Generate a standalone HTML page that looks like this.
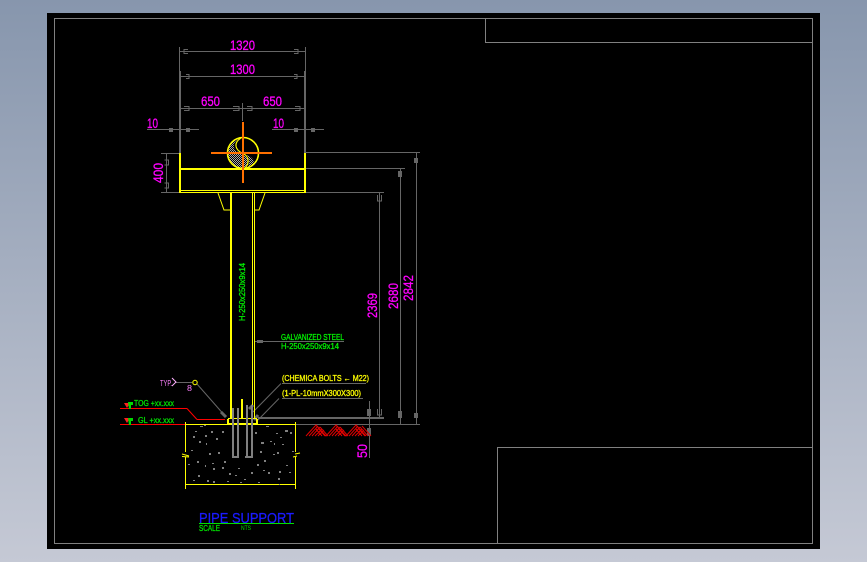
<!DOCTYPE html>
<html><head><meta charset="utf-8"><style>
html,body{margin:0;padding:0;width:867px;height:562px;overflow:hidden;background:linear-gradient(180deg,#8796ad 0%,#c5c9d5 100%)}
svg{position:absolute;left:0;top:0}
text{font-family:"Liberation Sans",sans-serif;stroke-width:.3px;paint-order:stroke}
</style></head><body>
<svg width="867" height="562" viewBox="0 0 867 562" xmlns="http://www.w3.org/2000/svg">
<defs><pattern id="h" width="2" height="2" patternUnits="userSpaceOnUse"><rect width="2" height="2" fill="#000"/><rect width="1" height="1" fill="#a8a8a8"/><rect x="1" y="1" width="1" height="1" fill="#a8a8a8"/></pattern></defs>
<rect x="47" y="13" width="773" height="536" fill="#000"/>
<g shape-rendering="crispEdges" fill="none" stroke="#808080" stroke-width="1">
<rect x="54.5" y="18.5" width="758" height="525"/>
<path d="M485.500 18.500V42.500H812.500M497.500 543.500V447.500H812.500"/>
</g>
<g shape-rendering="crispEdges" fill="none" stroke="#666" stroke-width="1">
<path d="M179.500 47V153M305.500 47V153M180 51.500H305M180 76.500H305M180 108.500H305M242.500 103V121"/>
<path d="M147 129.500H199M272 129.500H324M166.500 153V192M161 153.500H179M161 192.500H179"/>
<path d="M305 152.500H420M305 168.500H405M305 192.500H384M379.500 192V417M400.500 168V424M416.500 153V424M369.500 401V458"/>
<path d="M258 424.500H420"/>
<path d="M255 341.500H344M282 383.500H366M282 398.500H363M176 382.500H192"/>
<path d="M188 49.500H184V53.500H188M294 49.500H298V53.500H294M186 74.500H189V78.500H186M294 74.500H297V78.500H294M184 106.500H189V110.500H184M233 106.500H239V110.500H233M247 106.500H252V110.500H247M295 106.500H300V110.500H295M164.500 160H168.500V165H164.500M164.500 183H168.500V188H164.500M377.500 195V201H381.500V195M377.500 409V415H381.500V409"/>
</g>
<g shape-rendering="crispEdges" fill="#666">
<rect x="179" y="71" width="2" height="82"/><rect x="304" y="71" width="2" height="82"/>
<rect x="169" y="128" width="4" height="4"/><rect x="186" y="128" width="4" height="4"/><rect x="294" y="128" width="4" height="4"/><rect x="311" y="128" width="4" height="4"/>
<rect x="398" y="171" width="4" height="6"/><rect x="398" y="411" width="4" height="7"/><rect x="414" y="158" width="4" height="5"/><rect x="414" y="413" width="4" height="5"/>
<rect x="367" y="409" width="4" height="7"/><rect x="367" y="428" width="4" height="8"/><rect x="257" y="340" width="6" height="3"/>
<rect x="258" y="417" width="126" height="2"/>
</g>
<g fill="none" stroke="#666" stroke-width="1">
<path d="M197 384L226 417M281 383.500L253 412M279 398.500L258 420"/>
<path d="M221 412L226 417M249 409L253 405M258 415L254 420" stroke-width="3"/>
</g>
<circle cx="243" cy="153" r="15.500" fill="#000"/>
<path d="M241 137.500C232 141 232 150 238 152C246 154 251 160 245 168.500C234 169 227.500 162 227.500 152Q228 143 236 139Z" fill="url(#h)"/>
<path d="M246 155C256 158 256 165 248 167.500C250 160 249 158 246 155Z" fill="url(#h)"/>
<circle cx="243" cy="153" r="15.500" fill="none" stroke="#ffff00" stroke-width="1.600"/>
<path d="M241 138C233 143 235 150 243 153.500C250 157 249 164 245 168" fill="none" stroke="#ffff00" stroke-width="1.200"/>
<g shape-rendering="crispEdges" fill="#ffff00">
<rect x="179" y="153" width="2" height="40"/><rect x="304" y="153" width="2" height="40"/>
<rect x="179" y="168" width="126" height="2"/><rect x="179" y="190" width="126" height="1"/><rect x="179" y="192" width="126" height="1"/>
<rect x="230" y="193" width="2" height="226"/><rect x="252" y="193" width="1" height="226"/><rect x="254" y="193" width="1" height="226"/>
<rect x="241" y="399" width="2" height="20"/>
<rect x="228" y="418" width="29" height="1"/><rect x="227" y="423" width="31" height="2"/><rect x="227" y="419" width="2" height="5"/><rect x="256" y="419" width="2" height="5"/>
<rect x="185" y="424" width="42" height="1"/><rect x="258" y="424" width="38" height="1"/>
<rect x="185" y="422" width="1" height="30"/><rect x="295" y="422" width="1" height="30"/>
<rect x="185" y="457" width="1" height="32"/><rect x="295" y="457" width="1" height="32"/><rect x="185" y="484" width="111" height="1"/>
</g>
<g fill="none" stroke="#ffff00" stroke-width="1">
<path d="M218 193L224 210H230M265 193L259 210H254M182 454L189 456M182 456.500L189 457M295 454L300 453M293 457L297 456"/>
<path d="M172 378L176 382L172 386" stroke="#ffb0ff"/>
</g>
<circle cx="195" cy="382.500" r="2.200" fill="none" stroke="#ffff00"/>
<g fill="#ff7000" shape-rendering="crispEdges"><rect x="211" y="152" width="61" height="2"/><rect x="242" y="122" width="2" height="61"/></g>
<g stroke="#ff0000" stroke-width="1" fill="none" shape-rendering="crispEdges"><path d="M120 408.500H187M120 424.500H185M197 419.500H225"/></g>
<path d="M187 408.500L197 419.500" stroke="#ff0000" fill="none"/>
<path d="M124 403H130L127 408ZM124 418H130L127 423Z" fill="#ff2020"/>
<path d="M128 402H133V405H131V409H129ZM128 418H133V421H131V425H129Z" fill="#00d800"/>
<g fill="none" stroke="#e00000" stroke-width="1">
<path d="M306 436L316 425L326 436L336 425L346 436L356 425L366 436M309 436L318 426M312 436L320 427M315 436L322 429M318 436L324 430M322 436L316 429M325 436L318 428M328 436L320 427M329 436L338 426M332 436L340 427M335 436L342 429M338 436L344 430M342 436L336 429M345 436L338 428M348 436L340 427M349 436L358 426M352 436L360 427M355 436L362 429M358 436L364 430M362 436L356 429M365 436L358 428M368 436L360 427M371 436L362 426"/>
</g>
<g shape-rendering="crispEdges" fill="#808080">
<rect x="232" y="408" width="2" height="49"/><rect x="237" y="408" width="2" height="49"/><rect x="232" y="456" width="7" height="2"/>
<rect x="246" y="405" width="2" height="52"/><rect x="251" y="405" width="2" height="52"/><rect x="245" y="456" width="8" height="2"/>
<rect x="195" y="431" width="2" height="1"/><rect x="193" y="436" width="2" height="2"/><rect x="205" y="435" width="2" height="2"/><rect x="211" y="431" width="2" height="2"/><rect x="199" y="441" width="2" height="2"/><rect x="191" y="450" width="2" height="1"/><rect x="206" y="443" width="1" height="2"/><rect x="216" y="438" width="2" height="2"/><rect x="222" y="431" width="2" height="2"/><rect x="218" y="452" width="2" height="2"/><rect x="209" y="453" width="2" height="2"/><rect x="197" y="461" width="2" height="2"/><rect x="188" y="464" width="2" height="1"/><rect x="212" y="463" width="2" height="1"/><rect x="224" y="461" width="2" height="2"/><rect x="213" y="468" width="2" height="2"/><rect x="205" y="465" width="1" height="2"/><rect x="198" y="475" width="2" height="2"/><rect x="193" y="480" width="2" height="1"/><rect x="207" y="480" width="2" height="2"/><rect x="213" y="481" width="2" height="2"/><rect x="227" y="481" width="2" height="1"/><rect x="240" y="482" width="2" height="1"/><rect x="238" y="468" width="2" height="1"/><rect x="222" y="467" width="2" height="2"/><rect x="229" y="473" width="2" height="2"/><rect x="235" y="475" width="2" height="1"/><rect x="255" y="432" width="2" height="2"/><rect x="261" y="442" width="3" height="2"/><rect x="276" y="433" width="2" height="1"/><rect x="285" y="430" width="3" height="2"/><rect x="280" y="437" width="2" height="1"/><rect x="290" y="432" width="2" height="2"/><rect x="270" y="441" width="2" height="1"/><rect x="274" y="443" width="1" height="2"/><rect x="282" y="444" width="2" height="1"/><rect x="260" y="451" width="2" height="2"/><rect x="273" y="454" width="2" height="1"/><rect x="277" y="452" width="2" height="2"/><rect x="292" y="451" width="2" height="1"/><rect x="257" y="464" width="2" height="2"/><rect x="263" y="470" width="2" height="1"/><rect x="268" y="472" width="2" height="2"/><rect x="279" y="471" width="2" height="2"/><rect x="286" y="465" width="2" height="1"/><rect x="264" y="460" width="2" height="2"/><rect x="289" y="472" width="2" height="1"/><rect x="278" y="478" width="2" height="2"/><rect x="279" y="484" width="1" height="1"/><rect x="251" y="472" width="2" height="2"/><rect x="258" y="482" width="2" height="1"/><rect x="244" y="479" width="2" height="1"/><rect x="200" y="426" width="3" height="1"/><rect x="266" y="426" width="3" height="1"/><rect x="204" y="425" width="2" height="1"/>
</g>
<g fill="#ff00ff" stroke="#ff00ff" font-size="14">
<text x="230" y="50" textLength="25" lengthAdjust="spacingAndGlyphs">1320</text>
<text x="230" y="74" textLength="25" lengthAdjust="spacingAndGlyphs">1300</text>
<text x="201" y="106" textLength="19" lengthAdjust="spacingAndGlyphs">650</text>
<text x="263" y="106" textLength="19" lengthAdjust="spacingAndGlyphs">650</text>
<text x="147" y="128" textLength="11" lengthAdjust="spacingAndGlyphs">10</text>
<text x="273" y="128" textLength="11" lengthAdjust="spacingAndGlyphs">10</text>
<text transform="translate(163,183) rotate(-90)" textLength="20" lengthAdjust="spacingAndGlyphs">400</text>
<text transform="translate(377,318) rotate(-90)" textLength="25" lengthAdjust="spacingAndGlyphs">2369</text>
<text transform="translate(398,309) rotate(-90)" textLength="26" lengthAdjust="spacingAndGlyphs">2680</text>
<text transform="translate(413,301) rotate(-90)" textLength="26" lengthAdjust="spacingAndGlyphs">2842</text>
<text transform="translate(367,458) rotate(-90)" textLength="14" lengthAdjust="spacingAndGlyphs">50</text>
</g>
<g font-size="8">
<text x="160" y="386" fill="#ff80ff" textLength="12" lengthAdjust="spacingAndGlyphs">TYP.</text>
<text x="187" y="391" fill="#ff80ff" textLength="5" lengthAdjust="spacingAndGlyphs">8</text>
<text x="134" y="406" fill="#00e000" stroke="#00e000" textLength="40" lengthAdjust="spacingAndGlyphs">TOG +xx.xxx</text>
<text x="138" y="423" fill="#00e000" stroke="#00e000" textLength="36" lengthAdjust="spacingAndGlyphs">GL +xx.xxx</text>
<text x="281" y="340" fill="#00f000" stroke="#00f000" textLength="63" lengthAdjust="spacingAndGlyphs">GALVANIZED STEEL</text>
<text x="281" y="349" fill="#00f000" stroke="#00f000" textLength="58" lengthAdjust="spacingAndGlyphs">H-250x250x9x14</text>
<text transform="translate(245,321) rotate(-90)" fill="#00f000" stroke="#00f000" textLength="58" lengthAdjust="spacingAndGlyphs">H-250x250x9x14</text>
<text x="282" y="381" fill="#ffff00" stroke="#ffff00" textLength="87" lengthAdjust="spacingAndGlyphs">(CHEMICA BOLTS ← M22)</text>
<text x="282" y="396" fill="#ffff00" stroke="#ffff00" textLength="79" lengthAdjust="spacingAndGlyphs">(1-PL-10mmX300X300)</text>
<text x="199" y="531" fill="#00e000" stroke="#00e000" textLength="21" lengthAdjust="spacingAndGlyphs">SCALE</text>
<text x="241" y="530" fill="#00e000" font-size="6" textLength="10" lengthAdjust="spacingAndGlyphs">NTS</text>
</g>
<text x="199" y="523" fill="#1a1aff" stroke="#1a1aff" font-size="15" textLength="95" lengthAdjust="spacingAndGlyphs">PIPE SUPPORT</text>
<rect x="199" y="523" width="95" height="1" fill="#00e000" shape-rendering="crispEdges"/>
</svg>
</body></html>
